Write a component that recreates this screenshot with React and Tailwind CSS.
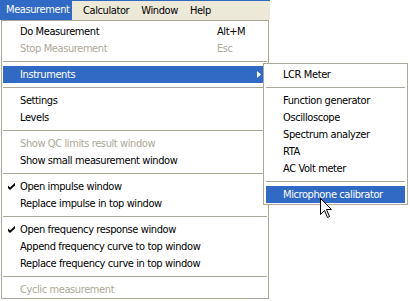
import React from 'react';

const SEP = { sep: true };

const mainItems = [
  { label: 'Do Measurement', shortcut: 'Alt+M' },
  { label: 'Stop Measurement', shortcut: 'Esc', disabled: true },
  SEP,
  { label: 'Instruments', submenu: true, active: true },
  SEP,
  { label: 'Settings' },
  { label: 'Levels' },
  SEP,
  { label: 'Show QC limits result window', disabled: true },
  { label: 'Show small measurement window' },
  SEP,
  { label: 'Open impulse window', checked: true },
  { label: 'Replace impulse in top window' },
  SEP,
  { label: 'Open frequency response window', checked: true },
  { label: 'Append frequency curve to top window' },
  { label: 'Replace frequency curve in top window' },
  SEP,
  { label: 'Cyclic measurement', disabled: true },
];

const subItems = [
  { label: 'LCR Meter' },
  SEP,
  { label: 'Function generator' },
  { label: 'Oscilloscope' },
  { label: 'Spectrum analyzer' },
  { label: 'RTA' },
  { label: 'AC Volt meter' },
  SEP,
  { label: 'Microphone calibrator', active: true },
];

export default function App() {
  return (
    <div
      className="relative w-[410px] h-[301px] bg-white overflow-hidden text-[11px] text-black tracking-[-0.4px]"
      style={{ fontFamily: '"DejaVu Sans Condensed", "Liberation Sans", Arial, sans-serif' }}
    >
      {/* Menu bar */}
      <div className="flex w-[270px] h-[20px] bg-[#ECE9D8] border-t border-[#316AC5]">
        <div className="w-[72px] h-[20px] -mt-px bg-[#316AC5] text-white pl-[6px] leading-[20px] whitespace-nowrap">
          Measurement
        </div>
        <div className="ml-[5px] px-[6px] leading-[19px]">Calculator</div>
        <div className="px-[6px] leading-[19px]">Window</div>
        <div className="px-[6px] leading-[19px]">Help</div>
      </div>

      {/* Measurement dropdown */}
      <div className="ml-px w-[268px] border border-[#ACA899] bg-white pt-[2px] px-px">
        {mainItems.map((item, i) =>
          item.sep ? <Separator key={i} /> : <MainItem key={i} item={item} />
        )}
      </div>

      {/* Instruments submenu */}
      <div className="absolute left-[263px] top-[63px] w-[145px] border border-[#ACA899] bg-white pt-[2px] pb-px px-[2px]">
        {subItems.map((item, i) =>
          item.sep ? (
            <Separator key={i} />
          ) : (
            <div
              key={i}
              className={
                'h-[17px] leading-[17px] pl-[17px] whitespace-nowrap ' +
                (item.active ? 'bg-[#316AC5] text-white' : '')
              }
            >
              {item.label}
            </div>
          )
        )}
      </div>

      <Cursor />
    </div>
  );
}

function Separator() {
  return (
    <div className="py-[4px]">
      <div className="h-px bg-[#ACA899]" />
    </div>
  );
}

function MainItem({ item }) {
  const color = item.active ? 'bg-[#316AC5] text-white' : item.disabled ? 'text-[#ACA899]' : 'text-black';
  return (
    <div className={'relative flex h-[17px] leading-[17px] whitespace-nowrap ' + color}>
      {item.checked && <CheckIcon />}
      <span className="w-[214px] pl-[17px]">{item.label}</span>
      {item.shortcut && <span>{item.shortcut}</span>}
      {item.submenu && <ArrowIcon />}
    </div>
  );
}

function CheckIcon() {
  return (
    <svg className="absolute left-[5px] top-[5px]" width="7" height="7" viewBox="0 0 7 7">
      <path d="M0 2.5 L2 4.5 L7 -0.2 L7 2.5 L2 7 L0 5 Z" fill="#000" />
    </svg>
  );
}

function ArrowIcon() {
  return (
    <svg className="absolute left-[254px] top-[5px]" width="4" height="7" viewBox="0 0 4 7">
      <path d="M0 0 L4 3.5 L0 7 Z" fill="#fff" />
    </svg>
  );
}

function Cursor() {
  return (
    <svg className="absolute left-[320px] top-[198px]" width="13" height="21" viewBox="0 0 13 21">
      <path
        d="M0.5 0.5 L0.5 16.5 L4.5 12.5 L7.5 19.5 L9.5 18.5 L6.5 11.5 L11.5 11.5 Z"
        fill="#fff"
        stroke="#000"
        strokeWidth="1"
        strokeLinejoin="miter"
      />
    </svg>
  );
}
